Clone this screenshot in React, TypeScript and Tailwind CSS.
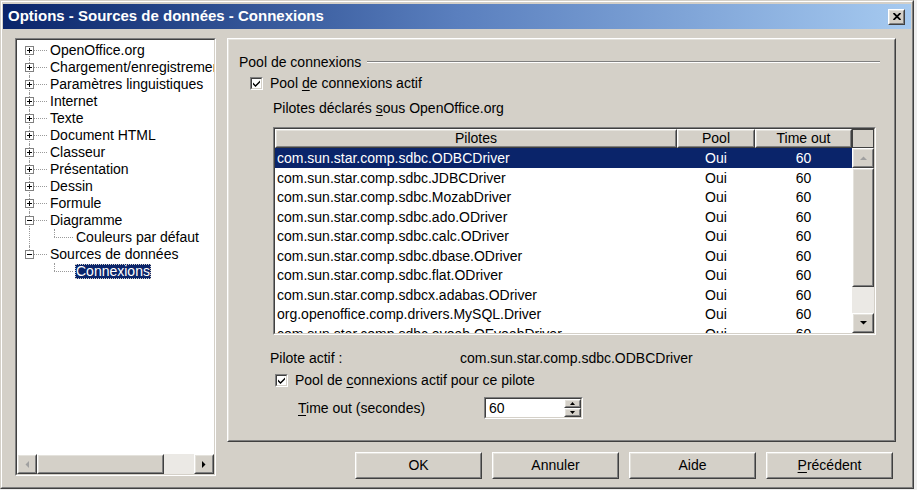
import React from "react";

const font = "font-['Liberation_Sans',Arial,sans-serif]";

function Raised({ className = "", inner = "", children }: { className?: string; inner?: string; children?: React.ReactNode }) {
  return (
    <div className={`border border-t-white border-l-white border-r-[#404040] border-b-[#404040] ${className}`}>
      <div className={`h-full w-full border border-t-[#e4e2dc] border-l-[#e4e2dc] border-r-[#808080] border-b-[#808080] bg-[#d4d0c8] ${inner}`}>
        {children}
      </div>
    </div>
  );
}

function Sunken({ className = "", inner = "", children }: { className?: string; inner?: string; children?: React.ReactNode }) {
  return (
    <div className={`border border-t-[#808080] border-l-[#808080] border-r-white border-b-white ${className}`}>
      <div className={`h-full w-full border border-t-[#404040] border-l-[#404040] border-r-[#d4d0c8] border-b-[#d4d0c8] bg-white ${inner}`}>
        {children}
      </div>
    </div>
  );
}

function Arrow({ dir, gray }: { dir: "up" | "down" | "left" | "right"; gray?: boolean }) {
  const pts = {
    up: "0,4 7,4 3.5,0.5",
    down: "0,0 7,0 3.5,3.5",
    left: "4,0 4,7 0.5,3.5",
    right: "0,0 0,7 3.5,3.5",
  }[dir];
  const w = dir === "up" || dir === "down" ? 7 : 4;
  const h = dir === "up" || dir === "down" ? 4 : 7;
  return (
    <svg width={w} height={h} viewBox={`0 0 ${w} ${h}`}>
      <polygon points={pts} fill={gray ? "#a0a0a0" : "#000"} />
    </svg>
  );
}

function CheckBox() {
  return (
    <Sunken className="w-[13px] h-[13px] shrink-0" inner="flex items-center justify-center">
      <svg width="7" height="7" viewBox="0 0 7 7">
        <path d="M0,2.5 L2.5,5 L7,0.5 L7,2.5 L2.5,7 L0,4.5 Z" fill="#000" />
      </svg>
    </Sunken>
  );
}

type TreeItem = { label: string; child?: boolean; exp?: "+" | "-"; up?: boolean; down?: boolean; rootPass?: boolean; selected?: boolean };

const tree: TreeItem[] = [
  { label: "OpenOffice.org", exp: "+", down: true },
  { label: "Chargement/enregistrement", exp: "+", up: true, down: true },
  { label: "Paramètres linguistiques", exp: "+", up: true, down: true },
  { label: "Internet", exp: "+", up: true, down: true },
  { label: "Texte", exp: "+", up: true, down: true },
  { label: "Document HTML", exp: "+", up: true, down: true },
  { label: "Classeur", exp: "+", up: true, down: true },
  { label: "Présentation", exp: "+", up: true, down: true },
  { label: "Dessin", exp: "+", up: true, down: true },
  { label: "Formule", exp: "+", up: true, down: true },
  { label: "Diagramme", exp: "-", up: true, down: true },
  { label: "Couleurs par défaut", child: true, rootPass: true },
  { label: "Sources de données", exp: "-", up: true },
  { label: "Connexions", child: true, selected: true },
];

function TreeRow({ item }: { item: TreeItem }) {
  return (
    <div className="relative h-[17px] flex items-center whitespace-nowrap">
      {/* connector lines */}
      {item.up && <span className="absolute left-[12px] top-0 h-[8px] border-l border-dotted border-[#9a9a9a]" />}
      {item.down && <span className="absolute left-[12px] top-[8px] h-[9px] border-l border-dotted border-[#9a9a9a]" />}
      {item.rootPass && <span className="absolute left-[12px] top-0 h-[17px] border-l border-dotted border-[#9a9a9a]" />}
      {!item.child && <span className="absolute left-[17px] top-[8px] w-[13px] border-t border-dotted border-[#9a9a9a]" />}
      {item.child && (
        <>
          <span className="absolute left-[37px] top-0 h-[8px] border-l border-dotted border-[#9a9a9a]" />
          <span className="absolute left-[37px] top-[8px] w-[19px] border-t border-dotted border-[#9a9a9a]" />
        </>
      )}
      {item.exp && (
        <span className="absolute left-[8px] top-[4px] w-[9px] h-[9px] border border-[#808080] bg-white flex items-center justify-center">
          <span className="relative w-[5px] h-[5px]">
            <span className="absolute left-0 top-[2px] w-[5px] h-[1px] bg-black" />
            {item.exp === "+" && <span className="absolute left-[2px] top-0 w-[1px] h-[5px] bg-black" />}
          </span>
        </span>
      )}
      {item.selected ? (
        <span className="ml-[58px] px-[1px] leading-[15px] bg-[#0a246a] text-white outline-1 outline-dotted outline-[#d4d0c8] -outline-offset-1">
          {item.label}
        </span>
      ) : (
        <span className={item.child ? "ml-[59px]" : "ml-[33px]"}>{item.label}</span>
      )}
    </div>
  );
}

const drivers = [
  "com.sun.star.comp.sdbc.ODBCDriver",
  "com.sun.star.comp.sdbc.JDBCDriver",
  "com.sun.star.comp.sdbc.MozabDriver",
  "com.sun.star.comp.sdbc.ado.ODriver",
  "com.sun.star.comp.sdbc.calc.ODriver",
  "com.sun.star.comp.sdbc.dbase.ODriver",
  "com.sun.star.comp.sdbc.flat.ODriver",
  "com.sun.star.comp.sdbcx.adabas.ODriver",
  "org.openoffice.comp.drivers.MySQL.Driver",
  "com.sun.star.comp.sdbc.evoab.OEvoabDriver",
];

function Button({ children }: { children: React.ReactNode }) {
  return (
    <Raised className="w-[127px] h-[27px]" inner="flex items-center justify-center">
      {children}
    </Raised>
  );
}

export default function App() {
  return (
    <div className={`w-[917px] h-[490px] bg-[#eeeeee] overflow-hidden text-[14px] text-black ${font}`}>
      <div className="w-[914px] h-[489px] bg-[#d4d0c8] border border-t-[#d4d0c8] border-l-[#d4d0c8] border-r-[#404040] border-b-[#404040]">
        <div className="h-full w-full border border-t-white border-l-white border-r-[#808080] border-b-[#808080] px-[1px] pt-[2px]">
          {/* title bar */}
          <div className="h-[25px] flex items-center bg-linear-to-r from-[#0a246a] via-[#5a7fbe] to-[#a6caf0] pl-[5px] pr-[6px]">
            <span className="text-white font-bold text-[15px] whitespace-nowrap">Options - Sources de données - Connexions</span>
            <div className="flex-1" />
            <Raised className="w-[17px] h-[16px]" inner="flex items-center justify-center">
              <svg width="8" height="7" viewBox="0 0 8 7">
                <path d="M0.5 0 L7.5 7 M7.5 0 L0.5 7" stroke="#000" strokeWidth="1.8" />
              </svg>
            </Raised>
          </div>

          <div className="flex pt-[9px] pl-[12px]">
            {/* tree */}
            <Sunken className="w-[201px] h-[438px] shrink-0" inner="flex flex-col">
              <div className="flex-1 overflow-hidden pt-[2px]">
                {tree.map((t) => (
                  <TreeRow key={t.label} item={t} />
                ))}
              </div>
              <div className="h-[20px] flex">
                <Raised className="w-[20px] h-[20px]" inner="flex items-center justify-center">
                  <Arrow dir="left" gray />
                </Raised>
                <Raised className="w-[127px] h-[20px]" />
                <div className="flex-1 bg-[#ebe9e5]" />
                <Raised className="w-[20px] h-[20px]" inner="flex items-center justify-center">
                  <Arrow dir="right" />
                </Raised>
              </div>
            </Sunken>

            <div className="ml-[11px] flex flex-col">
              {/* options panel */}
              <Raised className="w-[669px] h-[404px]" inner="flex flex-col">
                <div className="mt-[12px] h-[20px] flex items-center pl-[10px]">
                  <span>Pool de connexions</span>
                  <div className="flex-1 ml-[6px] mr-[14px] h-[2px] border-t border-t-[#808080] border-b border-b-white" />
                </div>
                <div className="mt-[1px] h-[20px] flex items-center pl-[21px] gap-[7px]">
                  <CheckBox />
                  <span>
                    Pool <u className="underline-offset-2">d</u>e connexions actif
                  </span>
                </div>
                <div className="mt-[5px] h-[20px] flex items-center pl-[44px]">
                  <span>
                    Pilotes déclarés <u className="underline-offset-2">s</u>ous OpenOffice.org
                  </span>
                </div>

                {/* drivers table */}
                <Sunken className="mt-[9px] ml-[44px] w-[603px] h-[208px]" inner="flex flex-col overflow-hidden">
                  <div className="h-[19px] flex shrink-0">
                    <Raised className="w-[402px] h-[19px]" inner="flex items-center justify-center">Pilotes</Raised>
                    <Raised className="w-[78px] h-[19px]" inner="flex items-center justify-center">Pool</Raised>
                    <Raised className="w-[97px] h-[19px]" inner="flex items-center justify-center">Time out</Raised>
                    <div className="w-[22px] h-[19px] border border-[#404040] bg-[#d4d0c8]" />
                  </div>
                  <div className="flex flex-1 overflow-hidden">
                    <div className="w-[577px] overflow-hidden">
                      {drivers.map((d, i) => (
                        <div
                          key={d}
                          className={`h-[19.5px] grid grid-cols-[402px_78px_97px] items-center whitespace-nowrap ${
                            i === 0 ? "bg-[#0a246a] text-white" : ""
                          }`}
                        >
                          <span className="pl-[2px]">{d}</span>
                          <span className="text-center">Oui</span>
                          <span className="text-center">60</span>
                        </div>
                      ))}
                    </div>
                    <div className="w-[22px] flex flex-col">
                      <Raised className="w-[22px] h-[20px] shrink-0" inner="flex items-center justify-center">
                        <Arrow dir="up" gray />
                      </Raised>
                      <Raised className="w-[22px] h-[119px] shrink-0" />
                      <div className="flex-1 bg-[#ebe9e5]" />
                      <Raised className="w-[22px] h-[20px] shrink-0" inner="flex items-center justify-center">
                        <Arrow dir="down" />
                      </Raised>
                    </div>
                  </div>
                </Sunken>

                <div className="mt-[13px] h-[20px] flex items-center pl-[41px]">
                  <span className="w-[190px]">Pilote actif :</span>
                  <span>com.sun.star.comp.sdbc.ODBCDriver</span>
                </div>
                <div className="mt-[2px] h-[20px] flex items-center pl-[46px] gap-[7px]">
                  <CheckBox />
                  <span>
                    Pool de <u className="underline-offset-2">c</u>onnexions actif pour ce pilote
                  </span>
                </div>
                <div className="mt-[7px] h-[22px] flex items-center pl-[69px]">
                  <span className="w-[186px]">
                    <u className="underline-offset-2">T</u>ime out (secondes)
                  </span>
                  <Sunken className="w-[99px] h-[22px]" inner="flex">
                    <span className="flex-1 pl-[3px] flex items-center">60</span>
                    <div className="w-[17px] flex flex-col">
                      <Raised className="w-[17px] h-[10px]" inner="flex items-center justify-center">
                        <svg width="5" height="3" viewBox="0 0 5 3">
                          <polygon points="0,3 5,3 2.5,0" fill="#000" />
                        </svg>
                      </Raised>
                      <Raised className="w-[17px] h-[10px]" inner="flex items-center justify-center">
                        <svg width="5" height="3" viewBox="0 0 5 3">
                          <polygon points="0,0 5,0 2.5,3" fill="#000" />
                        </svg>
                      </Raised>
                    </div>
                  </Sunken>
                </div>
              </Raised>

              {/* dialog buttons */}
              <div className="mt-[10px] flex justify-end gap-[10px] pr-[3px]">
                <Button>OK</Button>
                <Button>Annuler</Button>
                <Button>Aide</Button>
                <Button>
                  <span>
                    <u className="underline-offset-2">P</u>récédent
                  </span>
                </Button>
              </div>
            </div>
          </div>
        </div>
      </div>
    </div>
  );
}
